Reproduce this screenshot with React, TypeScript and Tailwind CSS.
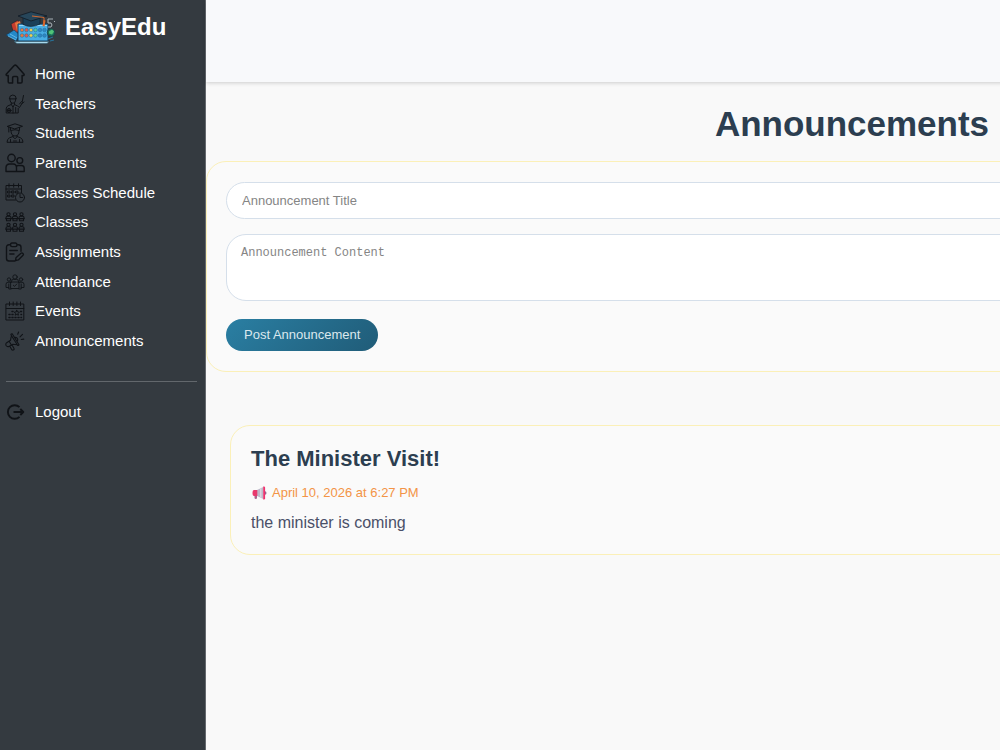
import type { ReactNode } from "react";

function Icon({ children, width = 1.2 }: { children: ReactNode; width?: number }) {
  return (
    <svg
      viewBox="0 0 20 20"
      className="size-5 shrink-0"
      fill="none"
      stroke="#101317"
      strokeWidth={width}
      strokeLinecap="round"
      strokeLinejoin="round"
      aria-hidden="true"
    >
      {children}
    </svg>
  );
}

const HomeIcon = (
  <Icon width={1.5}>
    <path d="M1.200 10.300 9 1.700q1.300-1.200 2.600 0l7.500 8.600q.3 1.200-1.100 1.200h-.9v6.200q0 1.300-1.300 1.300h-3.100v-5.200q0-1.200-1.200-1.200H8.800q-1.200 0-1.200 1.200V19H4.500q-1.300 0-1.300-1.300v-6.200h-.9q-1.400 0-1.100-1.200Z" />
  </Icon>
);

const TeacherIcon = (
  <Icon width={1}>
    <path d="M4.300 4.500Q4.500 1 7.800 1t3.500 3.500ZM5 4.800v1.300q.3 3.200 2.800 3.200t2.800-3.200V4.800" />
    <path d="M6.300 9.300v1.200L3 11.800q-1.800.8-1.800 3V19h12v-4.500M9.500 9.300v1.200l3 1.500 2 1.500 3-5-1-1-2 2.500M6.300 10.500 8 13l1.500-2.500M8 13v6M10.700 13.500v5M17.300 7.500l1.200-6M17 9.500l2-1.500" />
    <circle cx="4" cy="16.500" r="2" />
    <path d="M2.500 16.500h3M4 15v3" />
  </Icon>
);

const StudentIcon = (
  <Icon width={1}>
    <path d="m2.500 3.300 7.500-2.500 7.500 2.500L10 5.800ZM5.500 4.500v3q4.500-1.500 9 0v-3M3.800 4v5M6 8q0 5 4 5t4-5M8 12.500v1.300l2 2 2-2v-1.300M8 13.500l-3.500 1.300Q2 16 2 19.300h16q0-3.300-2.500-4.500L12 13.500M5.500 16.500v2.500M14.500 16.500v2.500M8.500 18h3" />
  </Icon>
);

const ParentsIcon = (
  <Icon width={1.4}>
    <circle cx="6.500" cy="5" r="3.700" />
    <circle cx="14.800" cy="7.500" r="2.900" />
    <path d="M11.500 18.500H1v-3.700Q1 11 4.700 11h3.500q3.300 0 3.300 3.800v3.700h7.700v-3.200q0-2.800-2.700-2.800h-3.200q-1.200 0-1.900.7" />
  </Icon>
);

const ScheduleIcon = (
  <Icon width={1}>
    <path d="M10.500 17H1V2.500h15.500v7M1 6h15.500M4 .8v3.400M8.700.8v3.400M13.500.8v3.400M3 8h2v2H3zM7 8h2v2H7zM11 8h2v2h-2zM3 12h2v2H3zM7 12h2v2H7z" />
    <circle cx="15" cy="14.500" r="4.500" />
    <path d="M15 11.500v3h2.500" />
  </Icon>
);

const ClassesIcon = (
  <Icon width={1.100}>
    {[0, 10.500].map((y) => (
      <g key={y} transform={`translate(0 ${y})`}>
        <circle cx="3.500" cy="2.300" r="1.600" />
        <circle cx="10" cy="2.300" r="1.600" />
        <circle cx="16.500" cy="2.300" r="1.600" />
        <path d="M1 6.500V5.800q0-1.600 1.500-1.600h2Q6 4.200 6 5.800v.7M7.500 6.500v-.7q0-1.600 1.500-1.600h2q1.500 0 1.500 1.600v.7M14 6.500v-.7q0-1.600 1.500-1.600h2Q19 4.200 19 5.800v.7M.6 6.600h18.800M1.500 6.600v2.200h4V6.600M8 6.600v2.200h4V6.600M14.500 6.600v2.200h4V6.600" />
      </g>
    ))}
  </Icon>
);

const AssignmentsIcon = (
  <Icon width={1.400}>
    <path d="M5.500 2.800H4Q1.500 2.800 1.500 5.300v11.200Q1.500 19 4 19h6M12 2.800h1.500q2.500 0 2.500 2.500v4M7 1h3.500q1.500 0 1.500 1.800T10.500 4.600H7q-1.500 0-1.500-1.800T7 1ZM4.800 8.500h7.500M4.800 12H9M11 15.700l5-4.500q1-.7 1.900.2t.1 1.900l-4.700 4.600-2.800.6Z" />
  </Icon>
);

const AttendanceIcon = (
  <Icon width={0.9}>
    <circle cx="10" cy="5" r="2.200" />
    <circle cx="4" cy="7.500" r="1.700" />
    <circle cx="16" cy="7.500" r="1.700" />
    <path d="M6.300 10V9.500q.4-2.200 2.300-2.200h2.800q1.900 0 2.300 2.200v.5M6 10h8v6.500H6zM6 10.200H3Q1 10.200 1 12.500v3h2.800V12M14 10.200h3q2 0 2 2.300v3h-2.800V12M8.300 13.200l1.200 1.200 2.300-2.400M3.800 15.500V17H6M16.200 15.500V17H14" />
  </Icon>
);

const EventsIcon = (
  <Icon width={1}>
    <path d="M1.300 3h17.500v16H1.300zM1.300 7.500h17.500M4.500 1v3.500M8.200 1v3.500M11.900 1v3.500M15.500 1v3.500" />
    <path d="M7 10.500h1M4 13.500h1M7 13.500h1M4 16.500h1M7 16.500h1M10 16.500h1M13 16.500h1M16 13.500h.5M16 16.500h.5M15.500 10.500h1" strokeWidth="1.500" />
    <path d="m11.800 9.300.8 1.600 1.700.3-1.200 1.200.3 1.800-1.600-.8-1.600.8.3-1.800-1.200-1.200 1.700-.3Z" />
  </Icon>
);

const AnnouncementsIcon = (
  <Icon width={1.100}>
    <path d="M7.200 2.800 14 13.700q-.2 1-1.300.8L5.900 3.700q.2-1 1.300-.9ZM6.200 5.500l-.7 3.800-3.800 2.400q-1.400 1.200-.6 2.800 1 1.600 2.800 1l4-2.300 4 .6M4.300 10.500l2.200 3.800M4.800 15.300l2 3.500q1 .7 1.900 0 .8-.7.200-1.500l-1.700-3.100M9.500 6.500q2.300-.5 3 1.200t-.6 2.900M12.700 3.300l.9-2.300M15 5.800l2.500-2.500M16.200 8.500l2.600-.4" />
  </Icon>
);

const LogoutIcon = (
  <Icon width={1.900}>
    <path d="M14.500 5.200A6.800 6.800 0 1 0 14.500 14.800M8.500 10h9.800M15.300 7l3 3-3 3" strokeLinecap="butt" />
  </Icon>
);

const navItems = [
  { label: "Home", icon: HomeIcon },
  { label: "Teachers", icon: TeacherIcon },
  { label: "Students", icon: StudentIcon },
  { label: "Parents", icon: ParentsIcon },
  { label: "Classes Schedule", icon: ScheduleIcon },
  { label: "Classes", icon: ClassesIcon },
  { label: "Assignments", icon: AssignmentsIcon },
  { label: "Attendance", icon: AttendanceIcon },
  { label: "Events", icon: EventsIcon },
  { label: "Announcements", icon: AnnouncementsIcon },
];

const keyDots = [
  { x: 17, color: "#e8793f" },
  { x: 21.500, color: "#e25b4b" },
  { x: 26, color: "#e9d057" },
  { x: 30.500, color: "#58c7a0" },
  { x: 35, color: "#2f86c2" },
  { x: 39.500, color: "#2f86c2" },
];

function Logo() {
  return (
    <svg viewBox="0 0 50 34" className="h-[34px] w-[50px] shrink-0" aria-hidden="true">
      <path d="m6 13 7-4 4 10-8 5Z" fill="#c63c2d" stroke="#20262c" strokeWidth=".7" />
      <path d="m10 12 5-2 2 8-5 2Z" fill="#e8793f" />
      <path d="m1 24 8-5 6 5-4 6Z" fill="#2488c8" stroke="#173b56" strokeWidth=".7" />
      <path d="m3 25 8 4M5 23l7 4" stroke="#7ccbf0" strokeWidth=".7" />
      <path d="M13 13h30v17H13Z" fill="#48ade4" stroke="#163e60" strokeWidth="1" />
      <path d="M14 14.500h28" stroke="#95d9fa" />
      {keyDots.map((dot) => (
        <g key={dot.x} fill={dot.color} stroke="#216b9a" strokeWidth=".5">
          <circle cx={dot.x} cy="19" r="1.800" />
          <circle cx={dot.x} cy="24.500" r="1.800" />
        </g>
      ))}
      <path d="M9 30.500h35l-2 2H12Z" fill="#a9d9ec" stroke="#31566a" strokeWidth=".6" />
      <path d="M18 6v7.500q8 4 17-.5V6Z" fill="#1b4058" stroke="#12212c" strokeWidth=".7" />
      <path d="M13 5 26 .8 42 5l-16 5Z" fill="#27465a" stroke="#111b25" strokeWidth=".8" />
      <path d="m27 5 12 1.500v8" fill="none" stroke="#d36930" strokeWidth="1" />
      <path d="m38.500 9-1 6 2 .5 1-6" fill="#d9652a" />
      <path d="M43 8h5M43 8v4q4-1 4 2t-4 2M49 10l1 1" fill="none" stroke="#a8b1b7" strokeWidth="1" />
      <circle cx="46" cy="21.500" r="3.800" fill="#1d735c" stroke="#173f48" strokeWidth=".7" />
      <path d="m44 20.500 3-2 2 2-2 3-3-1Z" fill="#50c478" />
      <path d="m43 28 5-2M45 30l4-1" stroke="#267da8" strokeWidth=".9" />
    </svg>
  );
}

function Megaphone() {
  return (
    <svg viewBox="0 0 16 16" className="size-4 shrink-0" aria-hidden="true">
      <path d="M3.500 9H6v4q0 1-1.200 1T3.500 13Z" fill="#aa628c" />
      <path d="M6 5 12.300 2v12L6 11Z" fill="#bdb8c9" />
      <path d="m9 3.600 1.500-.8v10.400L9 12.400Z" fill="#dad6df" />
      <path d="M3 5h3.300v6H3q-1.500 0-1.500-3T3 5Z" fill="#e9386d" />
      <path d="M12.200 1.500q1.900-.5 1.900 1.200v10.600q0 1.700-1.900 1.200Z" fill="#ef326d" />
      <path d="M14 6.300q1.500 0 1.500 1.700T14 9.700Z" fill="#9c638d" />
    </svg>
  );
}

function Sidebar() {
  return (
    <aside className="w-[206px] shrink-0 border-r border-[#65696e] bg-[#343a40] text-white">
      <a href="#home" className="flex h-[59px] items-start gap-[10px] pt-[11px] pl-[5px]">
        <Logo />
        <span className="text-2xl leading-8 font-bold">EasyEdu</span>
      </a>
      <nav aria-label="Main" className="text-[15px]">
        <ul className="grid h-[297px] auto-rows-fr">
          {navItems.map((item) => (
            <li key={item.label} className="flex items-center">
              <a href={`#${item.label}`} className="flex items-center gap-[10px] pl-[5px] leading-6">
                {item.icon}
                <span>{item.label}</span>
              </a>
            </li>
          ))}
        </ul>
        <hr className="mt-[25px] mr-2 ml-[6px] border-[#62676c]" />
        <a href="#logout" className="mt-[18px] flex items-center gap-[10px] pl-[5px] leading-6">
          {LogoutIcon}
          <span>Logout</span>
        </a>
      </nav>
    </aside>
  );
}

export default function App() {
  return (
    <div className="flex min-h-screen overflow-hidden bg-[#f9f9f9] font-['Liberation_Sans',Arial,sans-serif]">
      <Sidebar />
      <div className="min-w-[1292px] flex-1">
        <header className="h-[82px] bg-[#f8f9fb] shadow-[0_1px_4px_rgba(0,0,0,0.18)]" />
        <main>
          <h1 className="pt-[22px] text-center text-[35px] leading-10 font-bold text-[#2c3e50]">
            Announcements
          </h1>
          <form
            className="mt-[17px] flex flex-col items-start rounded-[20px] border border-[#fbf0b8] bg-[#fafafa] px-[19px] py-5"
            onSubmit={(event) => event.preventDefault()}
          >
            <input
              aria-label="Announcement Title"
              placeholder="Announcement Title"
              className="h-[37px] w-full rounded-[20px] border border-[#d5dfea] bg-white px-[15px] text-[13px] placeholder:text-[#858585]"
            />
            <textarea
              aria-label="Announcement Content"
              placeholder="Announcement Content"
              className="mt-[15px] h-[67px] w-full resize-none rounded-[20px] border border-[#d5dfea] bg-white px-[14px] py-[10px] font-['Liberation_Mono',monospace] text-[12px] leading-4 placeholder:text-[#858585]"
            />
            <button
              type="submit"
              className="mt-[18px] h-8 rounded-[20px] bg-linear-135 from-[#2a7fa3] to-[#205c78] px-[18px] text-[13px] text-[#dbe8ee]"
            >
              Post Announcement
            </button>
          </form>
          <article className="mx-6 mt-[53px] rounded-[20px] border border-[#fbf0b8] bg-[#fafafa] px-5 pt-[19px] pb-[19px]">
            <h2 className="text-[22px] leading-7 font-bold text-[#2c3e50]">The Minister Visit!</h2>
            <p className="mt-[10px] flex items-center gap-[5px] text-[13px] leading-5 text-[#f39446]">
              <Megaphone />
              April 10, 2026 at 6:27 PM
            </p>
            <p className="mt-2 text-base leading-6 text-[#4a5068]">the minister is coming</p>
          </article>
        </main>
      </div>
    </div>
  );
}
